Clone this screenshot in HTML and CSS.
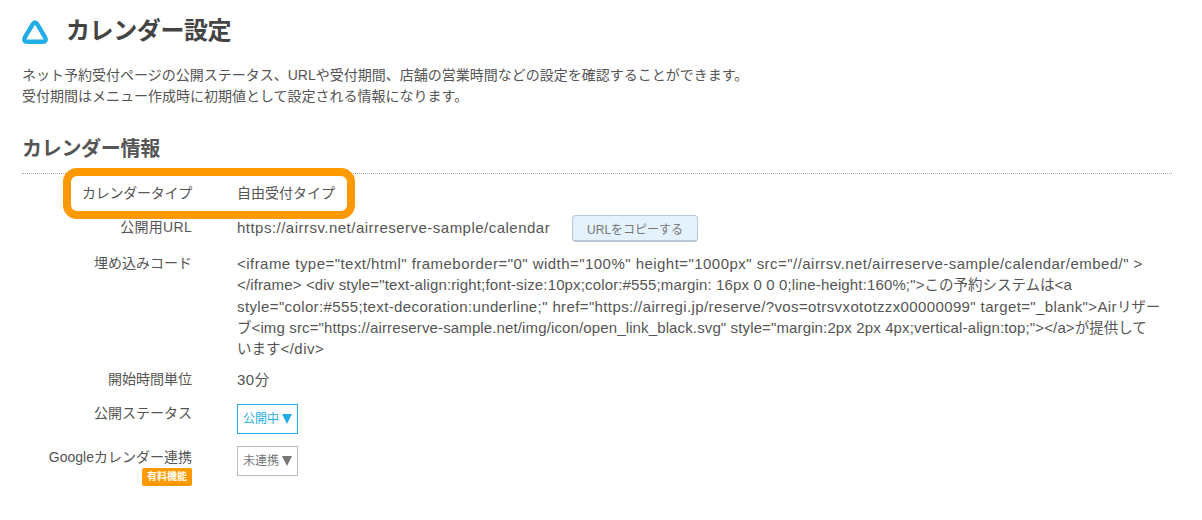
FILE: index.html
```html
<!DOCTYPE html>
<html lang="ja">

<head>
    <meta charset="UTF-8">
    <title>カレンダー設定</title>
    <link rel="stylesheet" href="styles.css">
</head>

<body>
<div class="page">
    <div class="page-title">
        <svg class="title-icon" width="26" height="24" viewBox="0 0 26 24">
            <path d="M10.8 4.2 Q13 0.8 15.2 4.2 L23 17.2 Q25.2 21.8 20.5 21.8 H5.5 Q0.8 21.8 3 17.2 Z" fill="none" stroke="#22ade6" stroke-width="4.4" stroke-linejoin="round"/>
        </svg>
        <h1>カレンダー設定</h1>
    </div>
    <p class="lead">ネット予約受付ページの公開ステータス、URLや受付期間、店舗の営業時間などの設定を確認することができます。<br>受付期間はメニュー作成時に初期値として設定される情報になります。</p>

    <h2>カレンダー情報</h2>
    <div class="info-list">
        <div class="highlight"></div>
        <div class="row row-type">
            <div class="row-label">カレンダータイプ</div>
            <div class="row-value">自由受付タイプ</div>
        </div>
        <div class="row row-url">
            <div class="row-label">公開用URL</div>
            <div class="row-value url-value">
                <span class="latin">https://airrsv.net/airreserve-sample/calendar</span>
                <button class="copy-button">URLをコピーする</button>
            </div>
        </div>
        <div class="row row-code">
            <div class="row-label">埋め込みコード</div>
            <div class="row-value latin code-value">
                <span class="code-line line-a">&lt;iframe type="text/html" frameborder="0" width="100%" height="1000px" src="//airrsv.net/airreserve-sample/calendar/embed/" &gt;</span>
                <span class="code-line line-b">&lt;/iframe&gt; &lt;div style="text-align:right;font-size:10px;color:#555;margin: 16px 0 0 0;line-height:160%;"&gt;<span class="ja">この予約システムは</span>&lt;a</span>
                <span class="code-line line-c">style="color:#555;text-decoration:underline;" href="https://airregi.jp/reserve/?vos=otrsvxototzzx00000099" target="_blank"&gt;Air<span class="ja">リザー</span></span>
                <span class="code-line line-d"><span class="ja">ブ</span>&lt;img src="https://airreserve-sample.net/img/icon/open_link_black.svg" style="margin:2px 2px 4px;vertical-align:top;"&gt;&lt;/a&gt;<span class="ja">が提供して</span></span>
                <span class="code-line line-a"><span class="ja">います</span>&lt;/div&gt;</span>
            </div>
        </div>
        <div class="row row-unit">
            <div class="row-label">開始時間単位</div>
            <div class="row-value latin">30<span class="ja">分</span></div>
        </div>
        <div class="row row-status">
            <div class="row-label">公開ステータス</div>
            <div class="row-value"><span class="status-box status-on">公開中<span class="arrow"></span></span></div>
        </div>
        <div class="row row-google">
            <div class="row-label">
                Googleカレンダー連携
                <span class="paid-badge">有料機能</span>
            </div>
            <div class="row-value"><span class="status-box status-off">未連携<span class="arrow"></span></span></div>
        </div>
    </div>
</div>
</body>

</html>
```

FILE: styles.css
```css
* {
    box-sizing: border-box;
}

body {
    font-family: 'Liberation Sans', 'Noto Sans CJK JP', sans-serif;
    background: #ffffff;
    margin: 0;
    color: #555;
}

.page {
    padding: 16px 30px 0 22px;
}

.page-title {
    display: flex;
    align-items: flex-start;
    height: 30px;
}

.title-icon {
    margin: 4px 18px 0 0;
}

h1 {
    margin: 0;
    font-size: 24px;
    font-weight: bold;
    letter-spacing: -0.4px;
    color: #444;
    line-height: 30px;
}

.lead {
    margin: 19px 0 0;
    font-size: 14px;
    line-height: 21px;
}

h2 {
    margin: 28px 0 0;
    padding-bottom: 10px;
    font-size: 20px;
    line-height: 28px;
    font-weight: bold;
    letter-spacing: -0.3px;
    border-bottom: 1px dotted #aaa;
}

.info-list {
    position: relative;
}

.highlight {
    position: absolute;
    left: 41px;
    top: -6px;
    width: 292px;
    height: 51px;
    border: 8px solid #ff9900;
    border-radius: 14px;
}

.row {
    display: flex;
    font-size: 14px;
    line-height: 21px;
}

.row-label {
    width: 170px;
    text-align: right;
    flex-shrink: 0;
}

.row-value {
    margin-left: 45px;
    flex: 1;
}

.latin {
    font-size: 15px;
    letter-spacing: 0.48px;
}

.ja {
    font-size: 14.5px;
    letter-spacing: 0;
}

.row-type {
    padding-top: 9px;
}

.row-type .row-label {
    letter-spacing: -0.25px;
}

.row-url {
    padding-top: 13px;
}

.row-url .row-label {
    letter-spacing: 0.3px;
}

.row-code {
    padding-top: 11px;
}

.row-unit {
    padding-top: 10px;
}

.row-status {
    padding-top: 12px;
}

.row-google {
    padding-top: 12px;
}

.row-google .row-label {
    padding-top: 1px;
}

.url-value {
    display: flex;
    align-items: flex-start;
}

.copy-button {
    margin: -2px 0 0 22px;
    width: 126px;
    height: 27px;
    padding: 0;
    font-family: inherit;
    font-size: 12px;
    color: #777;
    background: #e4f2fd;
    border: 1px solid #b7c7d6;
    border-bottom-width: 2px;
    border-radius: 4px;
}

.code-value {
    white-space: nowrap;
}

.code-line {
    display: block;
    height: 21.25px;
    overflow: hidden;
}

/* punctuation is narrower in the original font, so each line gets its own spacing */
.line-a {
    letter-spacing: 0.46px;
}

.line-b {
    letter-spacing: 0.14px;
}

.line-c {
    letter-spacing: 0.38px;
}

.line-d {
    letter-spacing: 0.13px;
}

.status-box {
    display: inline-flex;
    align-items: center;
    height: 30px;
    padding: 0 5px;
    font-size: 12px;
    letter-spacing: 0;
    border: 1px solid;
    vertical-align: top;
}

.status-on {
    margin-top: 1px;
    color: #22ade6;
    border-color: #22ade6;
}

.status-off {
    color: #777;
    border-color: #bbb;
}

.arrow {
    margin-left: 3px;
    width: 0;
    height: 0;
    border-left: 5.5px solid transparent;
    border-right: 5.5px solid transparent;
    border-top: 10px solid currentColor;
}

.paid-badge {
    display: block;
    width: 50px;
    height: 18px;
    margin: 0 0 0 auto;
    background: #ff9900;
    border-radius: 2px;
    color: #fff;
    font-size: 10px;
    font-weight: bold;
    line-height: 18px;
    text-align: center;
}
```
